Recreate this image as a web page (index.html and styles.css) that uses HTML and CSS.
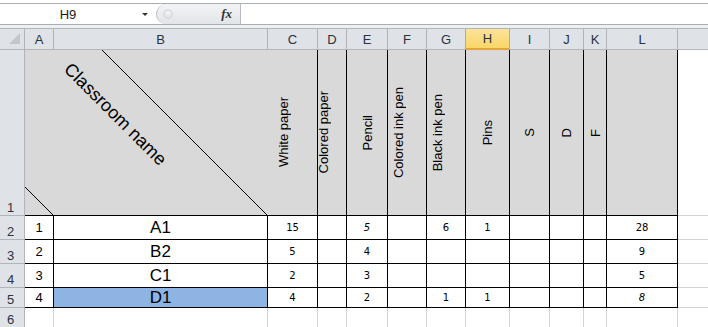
FILE: index.html
```html
<!DOCTYPE html>
<html lang="en">
<head>
  <meta charset="UTF-8" />
  <title>Classroom supplies</title>
  <link rel="stylesheet" href="styles.css">
</head>
<body>
  <div class="formula-bar">
    <div class="name-box"><span class="name-text">H9</span><span class="drop"></span></div>
    <div class="fx-area"><span class="fx-btn"></span><span class="fx">fx</span></div>
    <div class="formula-input"></div>
  </div>
  <div class="bar-gap"></div>

  <div class="sheet">
    <!-- column headers -->
    <div class="hd corner"><span class="tri"></span></div>
    <div class="hd">A</div>
    <div class="hd">B</div>
    <div class="hd">C</div>
    <div class="hd">D</div>
    <div class="hd">E</div>
    <div class="hd">F</div>
    <div class="hd">G</div>
    <div class="hd sel">H</div>
    <div class="hd">I</div>
    <div class="hd">J</div>
    <div class="hd">K</div>
    <div class="hd">L</div>
    <div class="hd last"></div>

    <!-- row 1 -->
    <div class="rh">1</div>
    <div class="title">
      <svg class="diag" width="243" height="166" viewBox="0 0 243 166">
        <line x1="-1" y1="136" x2="29" y2="166" stroke="#000" stroke-width="1"/>
        <line x1="76" y1="-1" x2="243" y2="166" stroke="#000" stroke-width="1"/>
      </svg>
      <span class="title-text">Classroom name</span>
    </div>
    <div class="c b g shift"><span class="vt">White paper</span></div>
    <div class="c b g shift"><span class="vt">Colored paper</span></div>
    <div class="c b g"><span class="vt">Pencil</span></div>
    <div class="c b g shift"><span class="vt">Colored ink pen</span></div>
    <div class="c b g shift"><span class="vt">Black ink pen</span></div>
    <div class="c b g"><span class="vt">Pins</span></div>
    <div class="c b g"><span class="vt">S</span></div>
    <div class="c b g"><span class="vt">D</span></div>
    <div class="c b g"><span class="vt">F</span></div>
    <div class="c b g"></div>
    <div class="c m"></div>

    <!-- row 2 -->
    <div class="rh">2</div>
    <div class="c b idx">1</div>
    <div class="c b name">A1</div>
    <div class="c b num">15</div>
    <div class="c b num"></div>
    <div class="c b num it">5</div>
    <div class="c b num"></div>
    <div class="c b num">6</div>
    <div class="c b num">1</div>
    <div class="c b num"></div>
    <div class="c b num"></div>
    <div class="c b num"></div>
    <div class="c b num">28</div>
    <div class="c m"></div>

    <!-- row 3 -->
    <div class="rh">3</div>
    <div class="c b idx">2</div>
    <div class="c b name">B2</div>
    <div class="c b num">5</div>
    <div class="c b num"></div>
    <div class="c b num">4</div>
    <div class="c b num"></div>
    <div class="c b num"></div>
    <div class="c b num"></div>
    <div class="c b num"></div>
    <div class="c b num"></div>
    <div class="c b num"></div>
    <div class="c b num">9</div>
    <div class="c m"></div>

    <!-- row 4 -->
    <div class="rh">4</div>
    <div class="c b idx">3</div>
    <div class="c b name">C1</div>
    <div class="c b num">2</div>
    <div class="c b num"></div>
    <div class="c b num">3</div>
    <div class="c b num"></div>
    <div class="c b num"></div>
    <div class="c b num"></div>
    <div class="c b num"></div>
    <div class="c b num"></div>
    <div class="c b num"></div>
    <div class="c b num">5</div>
    <div class="c m"></div>

    <!-- row 5 -->
    <div class="rh">5</div>
    <div class="c b idx">4</div>
    <div class="c b name picked">D1</div>
    <div class="c b num">4</div>
    <div class="c b num"></div>
    <div class="c b num">2</div>
    <div class="c b num"></div>
    <div class="c b num">1</div>
    <div class="c b num">1</div>
    <div class="c b num"></div>
    <div class="c b num"></div>
    <div class="c b num"></div>
    <div class="c b num it">8</div>
    <div class="c m"></div>

    <!-- row 6 -->
    <div class="rh">6</div>
    <div class="c"></div>
    <div class="c"></div>
    <div class="c"></div>
    <div class="c"></div>
    <div class="c"></div>
    <div class="c"></div>
    <div class="c"></div>
    <div class="c"></div>
    <div class="c"></div>
    <div class="c"></div>
    <div class="c"></div>
    <div class="c"></div>
    <div class="c m"></div>
  </div>
</body>
</html>
```

FILE: styles.css
```css
* {
  box-sizing: border-box;
}

body {
  margin: 0;
  width: 708px;
  height: 327px;
  overflow: hidden;
  background-color: #fff;
  font-family: 'Liberation Sans', Arial, sans-serif;
  color: #000;
}

/* formula bar */
.formula-bar {
  display: flex;
  height: 22px;
  margin-top: 3px;
  border-top: 1px solid #a9aeb5;
  border-bottom: 1px solid #a9aeb5;
  background-color: #fff;
}

.name-box {
  display: flex;
  align-items: center;
  width: 156px;
  font-size: 13px;
  color: #1a1a1a;
}

.name-text {
  width: 136px;
  text-align: center;
}

.drop {
  width: 0;
  height: 0;
  margin-left: 6px;
  border-left: 3px solid transparent;
  border-right: 3px solid transparent;
  border-top: 3px solid #333;
}

.fx-area {
  display: flex;
  align-items: center;
  justify-content: space-between;
  width: 85px;
  padding: 0 8px 0 6px;
  border-left: 1px solid #b7bcc3;
  border-right: 1px solid #b7bcc3;
  border-radius: 11px 0 0 11px;
  background: linear-gradient(#f3f4f6, #e1e4e8);
}

.fx-btn {
  width: 10px;
  height: 10px;
  border-radius: 50%;
  background: radial-gradient(circle at 50% 40%, #f4f5f7, #d5d9de);
  border: 1px solid #d2d6db;
}

.fx {
  font-family: 'Liberation Serif', serif;
  font-style: italic;
  font-weight: bold;
  font-size: 13px;
  color: #333;
}

.formula-input {
  flex: 1;
  background-color: #fff;
}

.bar-gap {
  height: 3px;
  background-color: #eef0f3;
}

/* sheet grid */
.sheet {
  display: grid;
  grid-template-columns: 25px 29px 214px 50px 29px 41px 39px 39px 44px 40px 34px 23px 71px 1fr;
  grid-template-rows: 21px 166px 24px 24px 24px 20px 20px;
  border-top: 1px solid #b1b5ba;
}

.hd {
  display: flex;
  align-items: center;
  justify-content: center;
  font-size: 13px;
  color: #28323e;
  background-color: #dfe2e6;
  border-right: 1px solid #b1b5ba;
  border-bottom: 1px solid #b1b5ba;
}

.hd.corner {
  align-items: flex-end;
  justify-content: flex-end;
  padding: 0 4px 5px 0;
}

.tri {
  width: 0;
  height: 0;
  border-left: 11px solid transparent;
  border-bottom: 11px solid #c3c7cc;
}

.hd.sel {
  background: linear-gradient(#fbe39a, #f9d667);
  border-right-color: #e2a53c;
  border-bottom: 2px solid #e2a53c;
  box-shadow: -1px 0 0 #e2a53c;
}

.hd.last {
  border-right: none;
}

.rh {
  display: flex;
  align-items: flex-end;
  justify-content: center;
  padding-right: 3px;
  font-size: 13px;
  line-height: 15px;
  color: #28323e;
  background-color: #dfe2e6;
  border-right: 1px solid #b1b5ba;
  border-bottom: 1px solid #b1b5ba;
}

.c {
  display: flex;
  align-items: center;
  justify-content: center;
  border-right: 1px solid #d4d4d4;
  border-bottom: 1px solid #d4d4d4;
}

.c.b {
  border-right-color: #000;
  border-bottom-color: #000;
}

.c.g {
  background-color: #d9d9d9;
}

.c.m {
  border-right: none;
}

.c.shift {
  padding-right: 18px;
}

.title {
  grid-column: span 2;
  position: relative;
  display: flex;
  align-items: flex-start;
  padding: 54px 0 0 22px;
  background-color: #d9d9d9;
  border-bottom: 1px solid #000;
}

.diag {
  position: absolute;
  top: 0;
  left: 0;
}

.title-text {
  font-size: 18px;
  line-height: 21px;
  white-space: nowrap;
  transform: rotate(45deg);
}

.vt {
  writing-mode: vertical-rl;
  transform: rotate(180deg);
  font-size: 13px;
  line-height: 15px;
  white-space: nowrap;
}

.idx {
  font-size: 13px;
}

.name {
  font-size: 17px;
}

.name.picked {
  background-color: #8db4e2;
}

.num {
  font-family: 'DejaVu Sans', Verdana, sans-serif;
  font-size: 10px;
}

.num.it {
  font-style: italic;
}
```
